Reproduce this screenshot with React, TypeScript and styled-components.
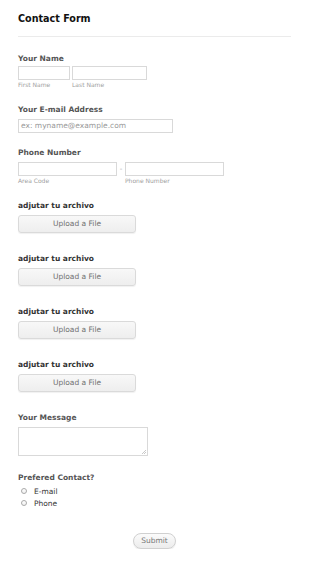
import React from "react";
import styled, { createGlobalStyle } from "styled-components";

const Global = createGlobalStyle`
  html, body { margin: 0; padding: 0; background: #fff; }
  body { font-family: "DejaVu Sans", Verdana, sans-serif; }
  * { box-sizing: border-box; }
`;

const Page = styled.div`
  width: 310px;
  padding: 0 19px 0 18px;
`;

const Header = styled.div`
  padding: 14px 0 12px;
  border-bottom: 1px solid #ebebeb;
`;

const Title = styled.h1`
  margin: 0;
  font-size: 9.6px;
  line-height: 10px;
  font-weight: bold;
  color: #111;
`;

const Field = styled.div<{ $top: number }>`
  padding-top: ${(p) => p.$top}px;
`;

const Label = styled.div<{ $dark?: boolean; $gap?: number }>`
  font-size: 7.5px;
  line-height: 9px;
  font-weight: bold;
  color: ${(p) => (p.$dark ? "#333" : "#555")};
  margin-bottom: ${(p) => (p.$gap ?? 4)}px;
  white-space: nowrap;
`;

const Row = styled.div`
  display: flex;
  align-items: flex-start;
  gap: 2px;
`;

const Col = styled.div`
  display: flex;
  flex-direction: column;
`;

const Input = styled.div<{ $w: number }>`
  width: ${(p) => p.$w}px;
  height: 14px;
  border: 1px solid #d9d9d9;
  background: #fff;
  font-size: 7.5px;
  line-height: 12px;
  color: #999;
  padding-left: 2px;
  white-space: nowrap;
  overflow: hidden;
`;

const Sub = styled.div`
  font-size: 6px;
  line-height: 7px;
  margin-top: 1px;
  color: #a0a0a0;
  white-space: nowrap;
`;

const Dash = styled.div`
  width: 4px;
  height: 14px;
  text-align: center;
  font-size: 7px;
  line-height: 14px;
  color: #aaa;
`;

const UploadButton = styled.div`
  width: 118px;
  height: 18px;
  border: 1px solid #dadada;
  border-radius: 3px;
  background: linear-gradient(#f8f8f8, #eeeeee);
  box-shadow: 0 1px 1px rgba(0, 0, 0, 0.06);
  font-size: 7.5px;
  line-height: 16px;
  text-align: center;
  color: #707070;
`;

const TextArea = styled.div`
  width: 130px;
  height: 29px;
  border: 1px solid #d9d9d9;
  position: relative;
`;

const Grip = styled.svg`
  position: absolute;
  right: 1px;
  bottom: 1px;
`;

const RadioRow = styled.div`
  display: flex;
  align-items: center;
  gap: 7px;
  padding-left: 3px;
  height: 12px;
  font-size: 7.5px;
  color: #333;
`;

const Radio = styled.span`
  width: 6px;
  height: 6px;
  border-radius: 50%;
  border: 1px solid #aaa;
  background: linear-gradient(#fff, #f0f0f0);
`;

const SubmitWrap = styled.div`
  display: flex;
  justify-content: center;
  padding-top: 24px;
`;

const Submit = styled.div`
  height: 16px;
  padding: 0 7px;
  border: 1px solid #d0d0d0;
  border-radius: 8px;
  background: linear-gradient(#fbfbfb, #ececec);
  box-shadow: 0 1px 1px rgba(0, 0, 0, 0.08);
  font-size: 7.5px;
  line-height: 14px;
  color: #777;
`;

const Upload = ({ top }: { top: number }) => (
  <Field $top={top}>
    <Label $dark $gap={5}>adjutar tu archivo</Label>
    <UploadButton>Upload a File</UploadButton>
  </Field>
);

export default function App() {
  return (
    <>
      <Global />
      <Page>
        <Header>
          <Title>Contact Form</Title>
        </Header>

        <Field $top={17}>
          <Label $gap={3}>Your Name</Label>
          <Row>
            <Col>
              <Input $w={52} />
              <Sub>First Name</Sub>
            </Col>
            <Col>
              <Input $w={75} />
              <Sub>Last Name</Sub>
            </Col>
          </Row>
        </Field>

        <Field $top={17}>
          <Label $gap={5}>Your E-mail Address</Label>
          <Input $w={155}>ex: myname@example.com</Input>
        </Field>

        <Field $top={15}>
          <Label $gap={5}>Phone Number</Label>
          <Row>
            <Col>
              <Input $w={99} />
              <Sub>Area Code</Sub>
            </Col>
            <Dash>-</Dash>
            <Col>
              <Input $w={99} />
              <Sub>Phone Number</Sub>
            </Col>
          </Row>
        </Field>

        <Upload top={17} />
        <Upload top={21} />
        <Upload top={21} />
        <Upload top={21} />

        <Field $top={21}>
          <Label $gap={5}>Your Message</Label>
          <TextArea>
            <Grip width="5" height="5" viewBox="0 0 5 5">
              <path d="M1 5 L5 1 M3 5 L5 3" stroke="#bbb" strokeWidth="0.8" />
            </Grip>
          </TextArea>
        </Field>

        <Field $top={17}>
          <Label $gap={3}>Prefered Contact?</Label>
          <RadioRow>
            <Radio />
            E-mail
          </RadioRow>
          <RadioRow>
            <Radio />
            Phone
          </RadioRow>
        </Field>

        <SubmitWrap>
          <Submit>Submit</Submit>
        </SubmitWrap>
      </Page>
    </>
  );
}
